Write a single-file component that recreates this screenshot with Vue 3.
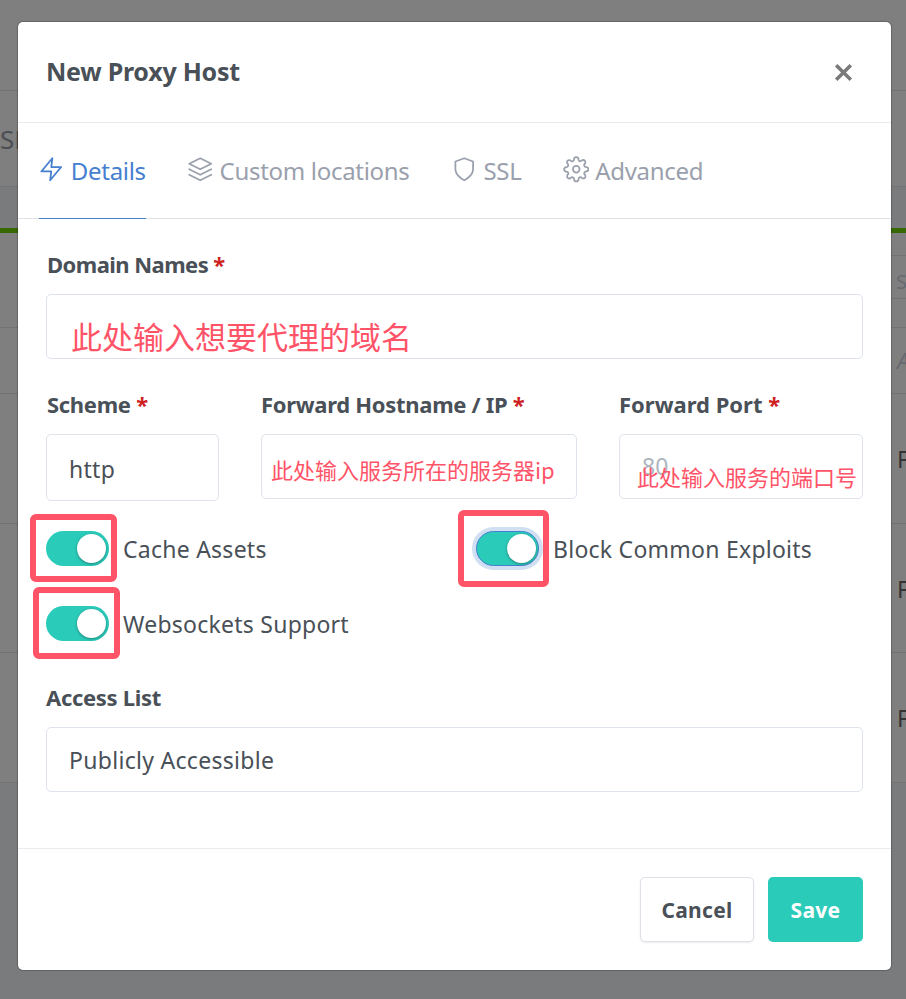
<template>
  <div class="page">
    <!-- dimmed page behind the dialog -->
    <div class="backdrop">
      <div class="bg-row bg-top"></div>
      <div class="bg-row bg-nav"><span class="bg-nav-text">SL</span></div>
      <div class="bg-band"></div>
      <div class="bg-green"></div>
      <div class="bg-row bg-head">
        <div class="bg-head-a"></div>
        <div class="bg-head-b"><span>S</span></div>
      </div>
      <div class="bg-row bg-cell-a"><em>A</em></div>
      <div v-for="n in 3" :key="n" class="bg-row bg-cell"><span>F</span></div>
    </div>

    <div class="modal">
      <div class="modal-header">
        <h5>New Proxy Host</h5>
        <svg class="close" viewBox="0 0 24 24"><path d="M5 5L19 19M19 5L5 19" /></svg>
      </div>

      <div class="tabs">
        <a
          v-for="tab in tabs"
          :key="tab.name"
          class="tab"
          :class="{ active: tab.name === activeTab }"
        >
          <svg class="tab-icon" viewBox="0 0 24 24">
            <path v-for="(d, idx) in tab.paths" :key="idx" :d="d" />
            <circle v-if="tab.circle" cx="12" cy="12" r="3" />
          </svg>
          {{ tab.name }}
        </a>
      </div>

      <div class="modal-body">
        <label class="label label-domain">Domain Names <span class="req">*</span></label>
        <div class="input domain">
          <span class="note note-big">此处输入想要代理的域名</span>
        </div>

        <div class="forward-grid">
          <div>
            <label class="label">Scheme <span class="req">*</span></label>
            <div class="input scheme">http</div>
          </div>
          <div>
            <label class="label">Forward Hostname / IP <span class="req">*</span></label>
            <div class="input">
              <span class="note note-host">此处输入服务所在的服务器ip</span>
            </div>
          </div>
          <div>
            <label class="label label-port">Forward Port <span class="req">*</span></label>
            <div class="input placeholder">
              80
              <span class="note note-port">此处输入服务的端口号</span>
            </div>
          </div>
        </div>

        <div class="switches">
          <div class="switch-item">
            <span class="toggle"><i class="knob"></i></span>
            <span class="switch-label">Cache Assets</span>
            <span class="mark mark-cache"></span>
          </div>
          <div class="switch-item">
            <span class="toggle focused"><i class="knob"></i></span>
            <span class="switch-label">Block Common Exploits</span>
            <span class="mark mark-block"></span>
          </div>
          <div class="switch-item">
            <span class="toggle"><i class="knob"></i></span>
            <span class="switch-label">Websockets Support</span>
            <span class="mark mark-ws"></span>
          </div>
        </div>

        <label class="label access-label">Access List</label>
        <div class="input access">Publicly Accessible</div>
      </div>

      <div class="modal-footer">
        <button class="btn btn-cancel">Cancel</button>
        <button class="btn btn-save">Save</button>
      </div>
    </div>
  </div>
</template>

<script setup>
import { ref } from 'vue'

const activeTab = ref('Details')

// feather icons
const tabs = [
  { name: 'Details', paths: ['M13 2L3 14h9l-1 8l10-12h-9l1-8z'] },
  {
    name: 'Custom locations',
    paths: ['M12 2L2 7l10 5l10-5l-10-5z', 'M2 17l10 5l10-5', 'M2 12l10 5l10-5']
  },
  {
    name: 'SSL',
    paths: ['M12 22s8-4 8-10V5l-8-3l-8 3v7c0 6 8 10 8 10z']
  },
  {
    name: 'Advanced',
    circle: true,
    paths: [
      'M19.4 15a1.65 1.65 0 0 0 .33 1.82l.06 .06a2 2 0 0 1 0 2.83a2 2 0 0 1-2.83 0l-.06-.06a1.65 1.65 0 0 0-1.82-.33a1.65 1.65 0 0 0-1 1.51V21a2 2 0 0 1-2 2a2 2 0 0 1-2-2v-.09A1.65 1.65 0 0 0 9 19.4a1.65 1.65 0 0 0-1.82 .33l-.06 .06a2 2 0 0 1-2.83 0a2 2 0 0 1 0-2.83l.06-.06a1.65 1.65 0 0 0 .33-1.82a1.65 1.65 0 0 0-1.51-1H3a2 2 0 0 1-2-2a2 2 0 0 1 2-2h.09A1.65 1.65 0 0 0 4.6 9a1.65 1.65 0 0 0-.33-1.82l-.06-.06a2 2 0 0 1 0-2.83a2 2 0 0 1 2.83 0l.06 .06a1.65 1.65 0 0 0 1.82 .33H9a1.65 1.65 0 0 0 1-1.51V3a2 2 0 0 1 2-2a2 2 0 0 1 2 2v.09a1.65 1.65 0 0 0 1 1.51a1.65 1.65 0 0 0 1.82-.33l.06-.06a2 2 0 0 1 2.83 0a2 2 0 0 1 0 2.83l-.06 .06a1.65 1.65 0 0 0-.33 1.82V9a1.65 1.65 0 0 0 1.51 1H21a2 2 0 0 1 2 2a2 2 0 0 1-2 2h-.09a1.65 1.65 0 0 0-1.51 1z'
    ]
  }
]
</script>

<style>
html, body {
  margin: 0;
  overflow: hidden;
}
</style>

<style scoped>
.page {
  position: relative;
  height: 999px;
  overflow: hidden;
  background: #7a7b7d;
  font-family: "Noto Sans", "Noto Sans CJK SC", sans-serif;
  color: #495057;
}

/* Backdrop */
.backdrop {
  display: flex;
  flex-direction: column;
}
.bg-row {
  background: #7f7f7f;
  border-bottom: 1px solid #737373;
  box-sizing: border-box;
}
.bg-top { height: 91px; }
.bg-nav {
  height: 96px;
  display: flex;
  align-items: center;
  font-size: 26px;
  color: #4b4e53;
}
.bg-band { height: 41px; background: #7a7b7d; }
.bg-green { height: 5px; background: #376802; }
.bg-head { height: 95px; }
.bg-head-a {
  height: 23px;
  margin-left: 891px;
  border-bottom: 1px solid #737373;
  box-sizing: border-box;
}
.bg-head-b {
  height: 43px;
  margin-left: 891px;
  padding-left: 5px;
  border-bottom: 1px solid #737373;
  box-sizing: border-box;
  font-size: 20px;
  line-height: 52px;
  color: #666a70;
  overflow: hidden;
}
.bg-cell-a {
  height: 66px;
  padding-left: 897px;
  font-size: 22px;
  line-height: 64px;
  color: #666a70;
  white-space: nowrap;
}
.bg-cell {
  height: 129.5px;
  padding-left: 897px;
  font-size: 23px;
  line-height: 130px;
  color: #333;
  white-space: nowrap;
}

/* Modal */
.modal {
  position: absolute;
  left: 18px;
  top: 22px;
  width: 873px;
  height: 948px;
  background: #fff;
  border-radius: 5px;
  box-shadow: 0 0 1px 1px rgba(0, 0, 0, 0.2);
  display: flex;
  flex-direction: column;
}
.modal-header {
  height: 100px;
  box-sizing: content-box;
  padding: 0 35px 0 28px;
  border-bottom: 1px solid #e9ecef;
  display: flex;
  align-items: center;
  justify-content: space-between;
}
.modal-header h5 {
  margin: 0 0 2px;
  font-size: 25px;
  font-weight: 700;
  letter-spacing: -0.25px;
}
.close {
  width: 25px;
  height: 25px;
  fill: none;
  stroke: #7a7a7a;
  stroke-width: 3.4;
}

/* Tabs */
.tabs {
  height: 95px;
  padding-left: 21px;
  border-bottom: 1px solid #dfe2e6;
  box-sizing: content-box;
  display: flex;
  gap: 42px;
}
.tab {
  height: 96px;
  box-sizing: border-box;
  display: flex;
  align-items: center;
  gap: 6px;
  font-size: 24px;
  letter-spacing: -0.3px;
  color: #9aa0ac;
  white-space: nowrap;
  border-bottom: 1px solid transparent;
}
.tab.active {
  color: #467fcf;
  border-bottom-color: #467fcf;
}
.tab-icon {
  width: 26.5px;
  height: 26.5px;
  fill: none;
  stroke: currentColor;
  stroke-width: 1.6;
  stroke-linecap: round;
  stroke-linejoin: round;
  margin: -2px 0 0 -0.7px;
}

/* Form */
.modal-body {
  flex: 1;
  padding: 30px 28px 0;
  border-bottom: 1px solid #e9ecef;
}
.label {
  display: block;
  font-size: 22px;
  font-weight: 700;
  line-height: 30px;
  letter-spacing: -0.3px;
  margin-bottom: 15px;
}
.label-domain { padding-left: 1px; letter-spacing: -0.55px; }
.label-port { letter-spacing: 0; }
.req { color: #cd201f; }
.input {
  position: relative;
  height: 65px;
  box-sizing: border-box;
  border: 1.5px solid #dee3ec;
  border-radius: 5px;
  padding: 0 22px;
  display: flex;
  align-items: center;
  font-size: 23px;
  color: #495057;
  background: #fff;
}
.domain { margin-bottom: 30px; }
.scheme { letter-spacing: 0.3px; padding-top: 2px; }
.access { letter-spacing: 0.3px; }
.forward-grid {
  display: grid;
  grid-template-columns: 173px 316px 244px;
  column-gap: 42px;
  align-items: start;
}
.forward-grid > div:first-child .label { padding-left: 1px; }
.forward-grid > div:first-child .input { height: 67px; }
.placeholder { color: #adb5bd; padding-bottom: 2px; }

/* Red annotations drawn over the screenshot */
.note {
  position: absolute;
  color: #ff5468;
  font-family: "Noto Sans CJK SC", "Noto Sans", sans-serif;
  white-space: nowrap;
  line-height: 1;
}
.note-big { left: 24px; top: 25px; font-size: 31px; }
.note-host { left: 9px; top: 23px; font-size: 22px; }
.note-port { left: 17px; top: 30px; font-size: 22px; }

/* Switches */
.switches {
  display: grid;
  grid-template-columns: 430px 1fr;
  row-gap: 40px;
  margin-top: 30px;
}
.switch-item {
  position: relative;
  display: flex;
  align-items: center;
  gap: 14px;
  height: 35px;
}
.toggle {
  position: relative;
  width: 63px;
  height: 35px;
  box-sizing: border-box;
  border-radius: 18px;
  background: #2bcbba;
  flex: none;
}
.toggle.focused {
  border: 1px solid #467fcf;
  box-shadow: 0 0 0 4px rgba(70, 127, 207, 0.25);
}
.knob {
  position: absolute;
  right: 3px;
  top: 3px;
  width: 29px;
  height: 29px;
  border-radius: 50%;
  background: #fff;
  box-shadow: 0 1px 3px rgba(0, 0, 0, 0.35);
}
.toggle.focused .knob { right: 2px; top: 2px; }
.switch-label {
  font-size: 23px;
  letter-spacing: 0.25px;
  color: #495057;
  white-space: nowrap;
}
.mark {
  position: absolute;
  box-sizing: border-box;
  border: 6px solid #ff5468;
  border-radius: 6px;
}
.mark-cache { left: -16px; top: -17px; width: 87px; height: 68px; }
.mark-block { left: -18px; top: -21px; width: 91px; height: 77px; }
.mark-ws { left: -13px; top: -19px; width: 87px; height: 72px; }

.access-label { margin-top: 41px; }

/* Footer */
.modal-footer {
  height: 121px;
  box-sizing: border-box;
  padding: 28px 28px 0;
  display: flex;
  justify-content: flex-end;
  gap: 14px;
}
.btn {
  height: 65px;
  border-radius: 5px;
  font-family: inherit;
  font-size: 21px;
  font-weight: 700;
  letter-spacing: 0.3px;
  padding: 0;
}
.btn-cancel {
  width: 114px;
  color: #495057;
  background: #fff;
  border: 1.5px solid #dee1e8;
  box-shadow: 0 1px 2px rgba(0, 0, 0, 0.08);
}
.btn-save {
  width: 95px;
  color: #fff;
  background: #2bcbba;
  border: none;
}
</style>
